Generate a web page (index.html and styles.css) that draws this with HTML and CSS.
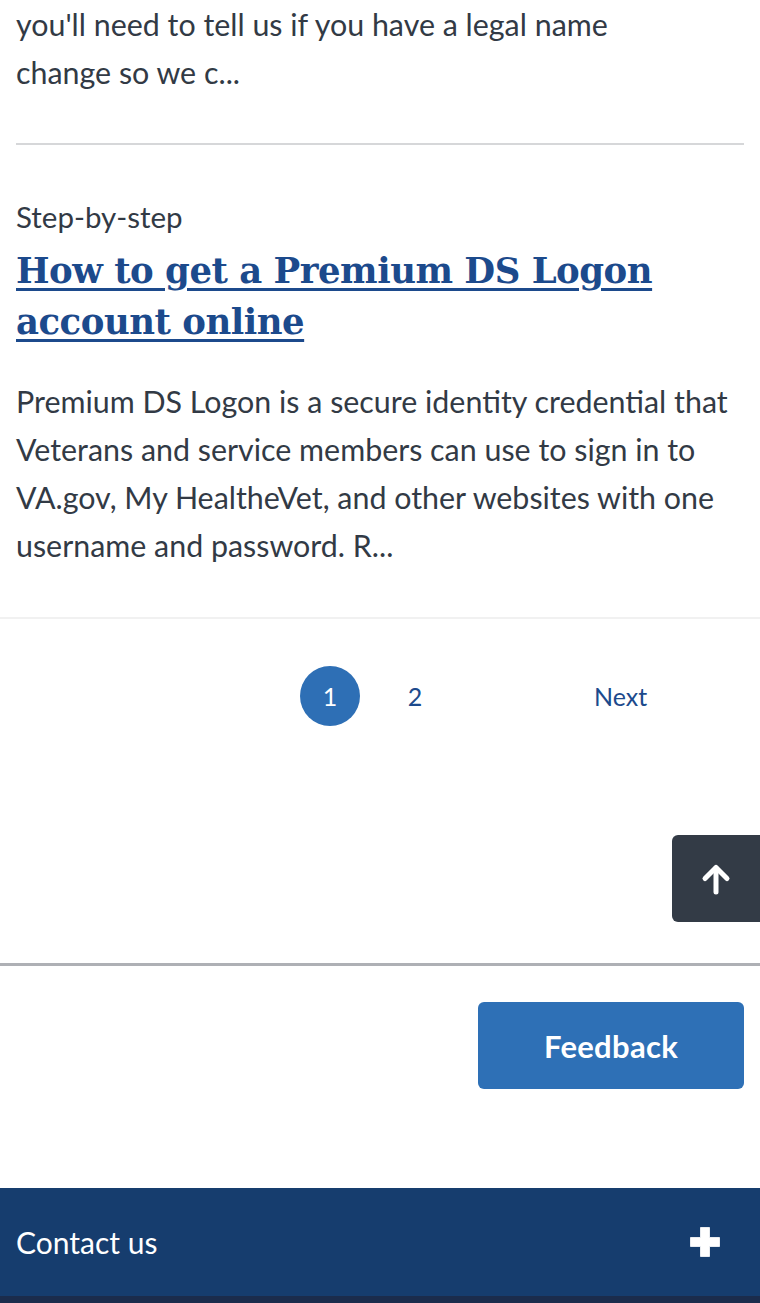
FILE: index.html
```html
<!DOCTYPE html>
<html lang="en">
<head>
<meta charset="utf-8">
<title>Search results</title>
<link rel="stylesheet" href="styles.css">
</head>
<body>
<main class="page">
  <section class="results">
    <article class="result result-first">
      <p class="desc">you'll need to tell us if you have a legal name<br>change so we c...</p>
    </article>
    <article class="result">
      <div class="kind">Step-by-step</div>
      <h2 class="title"><a href="#">How to get a Premium DS Logon account online</a></h2>
      <p class="desc">Premium DS Logon is a secure identity credential that Veterans and service members can use to sign in to VA.gov, My HealtheVet, and other websites with one username and password. R...</p>
    </article>
  </section>
  <nav class="pagination" aria-label="Pagination">
    <a class="page-num current" href="#">1</a>
    <a class="page-num" href="#">2</a>
    <a class="page-next" href="#">Next</a>
  </nav>
  <a class="back-to-top" href="#" aria-label="Back to top">
    <svg width="36" height="36" viewBox="0 0 36 36" fill="none" stroke="#fff" stroke-width="5" stroke-linecap="round" stroke-linejoin="round"><path d="M18 31V7"/><path d="M7 17.5L18 6.5l11 11"/></svg>
  </a>
  <div class="feedback-bar">
    <button class="feedback" type="button">Feedback</button>
  </div>
</main>
<footer class="footer">
  <div class="accordion">
    <span class="acc-label">Contact us</span>
    <svg class="plus" width="30" height="30" viewBox="0 0 30 30"><path d="M10.5 0.5h9v10H29.5v9h-10V29.5h-9v-10H0.5v-9h10z" fill="#fff" stroke="#fff" stroke-width="0.8" stroke-linejoin="round"/></svg>
  </div>
  <div class="footer-bottom"></div>
</footer>
</body>
</html>
```

FILE: styles.css
```css
html, body {
  margin: 0;
  padding: 0;
  background: #fff;
}
body {
  font-family: "Lato", "Liberation Sans", sans-serif;
  color: #323a45;
}
.page {
  position: relative;
}
.results {
  padding: 0 16px;
}
.result {
  border-bottom: 2px solid #d6d7d9;
  padding: 54px 0 47px;
}
.result-first {
  padding-top: 0;
}
.result:last-child {
  border-bottom: none;
  padding-bottom: 48px;
}
.desc {
  margin: 0;
  font-size: 30.4px;
  line-height: 48px;
}
.kind {
  font-size: 29.5px;
  line-height: 36px;
}
.title {
  margin: 10px 0 30px;
  font-family: "DejaVu Serif", "Liberation Serif", serif;
  font-weight: bold;
  font-size: 35.5px;
  line-height: 51px;
  letter-spacing: -0.5px;
}
.title a {
  color: #1c4a8c;
  text-decoration: underline;
  text-decoration-thickness: 3px;
  text-underline-offset: 5px;
}
.pagination {
  border-top: 2px solid #f1f1f1;
  display: flex;
  align-items: center;
  padding: 47px 0 0 300px;
  height: 60px;
}
.pagination a {
  font-size: 25px;
  color: #1c4a8c;
  text-decoration: none;
}
.page-num {
  width: 60px;
  height: 60px;
  display: flex;
  align-items: center;
  justify-content: center;
  border-radius: 50%;
}
.page-num + .page-num {
  margin-left: 25px;
}
.pagination .current {
  background: #2e6fb5;
  color: #fff;
}
.page-next {
  margin-left: 149px;
}
.back-to-top {
  position: absolute;
  right: 0;
  top: 835px;
  width: 88px;
  height: 87px;
  background: #333b46;
  border-radius: 6px 0 0 6px;
  display: flex;
  align-items: center;
  justify-content: center;
}
.feedback-bar {
  margin-top: 237px;
  border-top: 3px solid #aeb0b5;
  padding: 36px 16px 99px;
  display: flex;
  justify-content: flex-end;
}
.feedback {
  width: 266px;
  height: 87px;
  border: 0;
  border-radius: 6px;
  background: #2e70b6;
  color: #fff;
  font-family: "Lato", "Liberation Sans", sans-serif;
  font-weight: bold;
  font-size: 31px;
  letter-spacing: 0.3px;
}
.footer {
  background: #163d6e;
}
.accordion {
  height: 108px;
  display: flex;
  align-items: center;
  justify-content: space-between;
  padding: 0 40px 0 16px;
}
.acc-label {
  color: #fff;
  font-size: 30px;
}
.plus {
  display: block;
}
.footer-bottom {
  height: 7px;
  background: #1b2c4c;
}
```
